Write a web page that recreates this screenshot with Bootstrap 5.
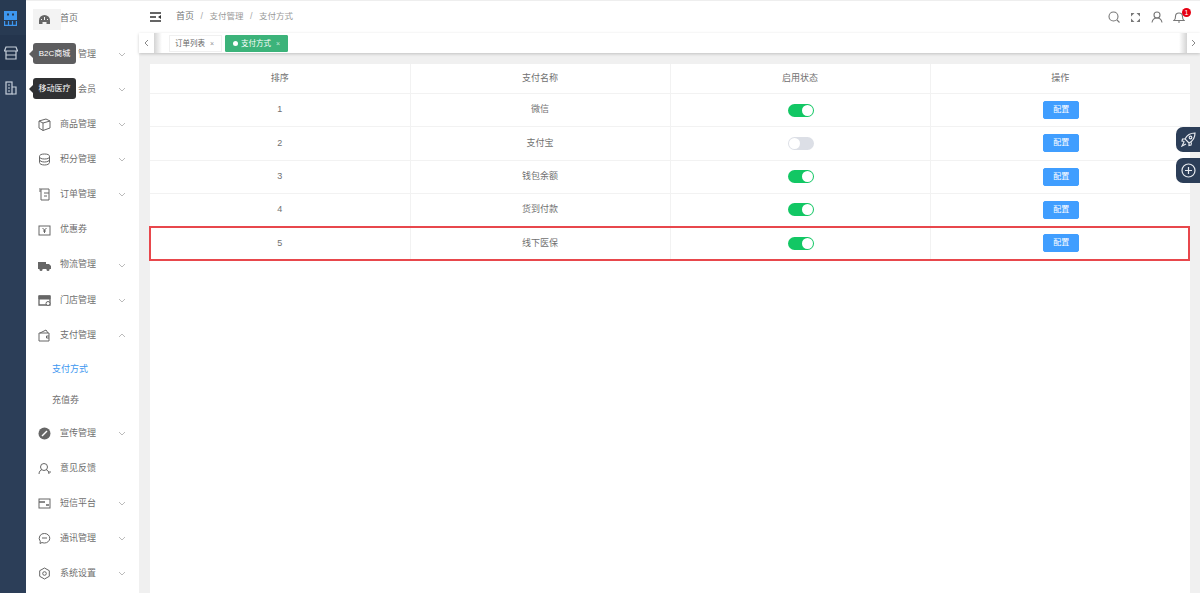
<!DOCTYPE html>
<html lang="zh"><head><meta charset="utf-8"><title>支付方式</title>
<link href="https://cdn.jsdelivr.net/npm/bootstrap@5.3.0/dist/css/bootstrap.min.css" rel="stylesheet">
<style>
html,body{height:593px;overflow:hidden}
body{font-family:"Liberation Sans","Noto Sans CJK SC",sans-serif;font-size:9px;color:#666;background:#f0f0f0}
svg{display:block;flex:none}
.shell{height:593px}
.rail{width:26px;background:#2c3e58;flex:none;position:relative}
.rail-item{height:35px;display:flex;align-items:center;justify-content:center;color:#c6cfda;padding-right:5px}
.rail-item.act{color:#3d97f0;background:#283a52}
.rail-item.mid{background:#24354d}
.tip{position:absolute;left:33px;height:21px;background:#303133;color:#fff;border-radius:3px;font-size:8px;line-height:21px;width:43px;text-align:center;white-space:nowrap}
.tip::before{content:"";position:absolute;left:-4px;top:7px;border:4px solid transparent;border-left:0;border-right-color:#303133}
.tip.t1{top:43px;background:#5d5d5f}.tip.t1::before{border-right-color:#5d5d5f}
.tip.t2{top:78px}
.side{width:113px;background:#fff;flex:none;padding-top:1.6px;box-shadow:inset 0 1px 0 #eee}
.mi{height:35.15px;display:flex;align-items:center;padding-left:12px;color:#6f6f6f;position:relative}
.mi .ic{width:13px;height:13px;margin-right:9px;color:#666;position:relative}
.mi .ch{margin-left:auto;margin-right:13px;color:#bbb}
.mi.home::before{content:"";position:absolute;left:7px;top:7px;width:28px;height:21px;background:#f3f3f3}
.hid{margin-left:18px}
.gap-ic{width:13px;margin-right:9px}
.sub{height:31.4px;display:flex;align-items:center;padding:2px 0 0 26px;color:#6f6f6f}
.sub.on{color:#3d97f0}
.main{min-width:0;flex:1 1 0}
.topbar{height:33px;background:#fff;padding:0 15px 0 11px;border-top:1px solid #eee}
.crumb{margin-left:15px;color:#777}
.crumb i{font-style:normal;margin:0 6.500px;color:#aaa}
.crumb .pale{color:#999;font-size:8.500px}
.tools{gap:10px}
.tabs{height:20px;background:#fff;box-shadow:0 1px 3px rgba(0,0,0,.2);position:relative}
.tab-arrow{width:15px;display:flex;align-items:center;justify-content:center;color:#888;height:20px;flex:none}
.tab-arrow.rt{width:13px}
.tab-fade{width:8px;height:20px;background:linear-gradient(90deg,#d4d4d4,#fff);margin-right:7px;flex:none}
.tab-fade.r{background:linear-gradient(90deg,#fff,#d4d4d4);margin:0 0 0 auto}
.tabi{height:17px;line-height:15px;font-size:7.500px;padding:0 7px 0 5px;margin:1px 3px 0 0;background:#fff;color:#666;border:1px solid #f0f0f0;white-space:nowrap}
.tabi.on{background:#3cb37a;color:#fff;border-color:#3cb37a;border-radius:1px;padding:0 7px}
.dot{display:inline-block;width:5px;height:5px;border-radius:50%;background:#fff;margin-right:3px;vertical-align:0}
.x{margin-left:5px;font-size:7px;opacity:.7}
.content{padding:11px 10px 0 11px;height:540px;position:relative}
.panel{height:100%;background:#fff}
.pay{table-layout:fixed;background:#fff;margin:0;font-size:9px;color:#707070;--bs-table-color:#707070;--bs-table-bg:#fff}
.pay th,.pay td{text-align:center;vertical-align:middle;padding:0;border-color:#f2f2f2;font-weight:400;border-width:0 1px 1px 0}
.pay th:last-child,.pay td:last-child{border-right:0}
.pay thead tr{height:29.5px}
.pay tbody tr{height:33.3px}
.hlbox{position:absolute;left:10px;top:173px;width:1041px;height:35px;border:2px solid #e8474c;pointer-events:none}
.sw{display:inline-block;width:26px;height:13px;border-radius:7px;background:#12c764;position:relative;vertical-align:middle;margin-left:2px}
.sw::after{content:"";position:absolute;right:1px;top:1px;width:11px;height:11px;border-radius:50%;background:#fff}
.sw.off{background:#dcdfe6}.sw.off::after{right:auto;left:1px}
.cfg{--bs-btn-bg:#409eff;--bs-btn-border-color:#409eff;--bs-btn-color:#fff;--bs-btn-hover-bg:#409eff;--bs-btn-hover-color:#fff;--bs-btn-padding-x:0;--bs-btn-padding-y:0;--bs-btn-font-size:8px;--bs-btn-border-radius:2px;width:36px;height:18px;line-height:16px;display:inline-block;vertical-align:middle;margin-left:2px}
.float{position:absolute;right:0;width:24px;height:25px;background:#2c3e58;border-radius:7px 0 0 7px;color:#e6e9ee;display:flex;align-items:center;justify-content:center}
.float.f1{top:127px}.float.f2{top:158px}
.bell{position:relative}
.badge-dot{position:absolute;left:9px;top:-3px;width:9px;height:9px;border-radius:50%;background:#e60012;color:#fff;font-size:7px;line-height:9px;text-align:center}
</style></head><body>
<div class="d-flex shell position-relative">
 <div class="rail">
  <div class="rail-item act"><svg width="13" height="16" viewBox="0 0 13 16" fill="currentColor"><path d="M0 1h13v9H0zM3 3.500v2h2v-2zM8 3.500v2h2v-2z" fill-rule="evenodd"/><path d="M.6 11v4.400h11.800V11M4.500 11v4M8.500 11v4" fill="none" stroke="currentColor" stroke-width="1.200"/></svg></div>
  <div class="rail-item mid"><svg width="14" height="14" viewBox="0 0 14 14" fill="none" stroke="currentColor" stroke-width="1.200"><path d="M2 1h10l1.500 4h-13z"/><path d="M2 5v8h10V5M2 9h10"/></svg></div>
  <div class="rail-item"><svg width="12" height="14" viewBox="0 0 12 14" fill="none" stroke="currentColor" stroke-width="1.200"><rect x="1" y="1" width="6" height="12"/><path d="M7 6h4v7H7M3 4h2M3 7h2M3 10h2"/></svg></div>
 </div>
 <div class="tip t1">B2C商城</div>
 <div class="tip t2">移动医疗</div>
 <nav class="side">
  <div class="mi home"><svg class="ic" viewBox="0 0 13 13" fill="currentColor"><path d="M6.500 2A5.500 5.500 0 0 0 1 7.500V11h3.500V9h4v2H12V7.500A5.500 5.500 0 0 0 6.500 2zM6 4h1v3H6zM3 6h1v1H3zM9 6h1v1H9z" fill-rule="evenodd"/></svg>首页</div>
  <div class="mi"><span class="gap-ic"></span><span class="hid">管理</span><svg class="ch" width="8" height="5" viewBox="0 0 8 5" fill="none" stroke="currentColor"><path d="M1 1l3 3 3-3"/></svg></div>
  <div class="mi"><span class="gap-ic"></span><span class="hid">会员</span><svg class="ch" width="8" height="5" viewBox="0 0 8 5" fill="none" stroke="currentColor"><path d="M1 1l3 3 3-3"/></svg></div>
  <div class="mi"><svg class="ic" viewBox="0 0 13 13" fill="none" stroke="currentColor"><path d="M1 3l7-2 4 2v7l-7 2.500L1 10zM1 3l4 2v7.500M5 5l7-2"/></svg>商品管理<svg class="ch" width="8" height="5" viewBox="0 0 8 5" fill="none" stroke="currentColor"><path d="M1 1l3 3 3-3"/></svg></div>
  <div class="mi"><svg class="ic" viewBox="0 0 13 13" fill="none" stroke="currentColor"><ellipse cx="6.500" cy="3.500" rx="5" ry="2.500"/><path d="M1.500 3.500v6c0 1.400 2.200 2.500 5 2.500s5-1.100 5-2.500v-6M1.500 6.500c0 1.400 2.200 2.500 5 2.500s5-1.100 5-2.500"/></svg>积分管理<svg class="ch" width="8" height="5" viewBox="0 0 8 5" fill="none" stroke="currentColor"><path d="M1 1l3 3 3-3"/></svg></div>
  <div class="mi"><svg class="ic" viewBox="0 0 13 13" fill="none" stroke="currentColor"><path d="M1 1h10v2M3 1v11h2M3 3H1M6 5h5M6 8h3M11 3v9H5"/></svg>订单管理<svg class="ch" width="8" height="5" viewBox="0 0 8 5" fill="none" stroke="currentColor"><path d="M1 1l3 3 3-3"/></svg></div>
  <div class="mi"><svg class="ic" viewBox="0 0 13 13" fill="none" stroke="currentColor"><rect x="1" y="2" width="11" height="9"/><path d="M4.500 4l2 2 2-2M6.500 6v3M5 7h3" /></svg>优惠券</div>
  <div class="mi"><svg class="ic" viewBox="0 0 13 13" fill="currentColor"><rect x="0" y="3" width="8" height="7"/><path d="M8 5h3l2 2v3H8z"/><circle cx="3" cy="10.500" r="1.500"/><circle cx="10" cy="10.500" r="1.500"/></svg>物流管理<svg class="ch" width="8" height="5" viewBox="0 0 8 5" fill="none" stroke="currentColor"><path d="M1 1l3 3 3-3"/></svg></div>
  <div class="mi"><svg class="ic" viewBox="0 0 13 13" fill="none" stroke="currentColor"><path d="M1 2h11v9H1z" stroke-width="1.300"/><path d="M1 2h11v3H1z" fill="currentColor"/><circle cx="10" cy="9.500" r="2" fill="#fff"/></svg>门店管理<svg class="ch" width="8" height="5" viewBox="0 0 8 5" fill="none" stroke="currentColor"><path d="M1 1l3 3 3-3"/></svg></div>
  <div class="mi"><svg class="ic" viewBox="0 0 13 13" fill="none" stroke="currentColor"><path d="M2 4l6-3 2 3M1 4h10v8H1zM11 7H8.500v2H11"/></svg>支付管理<svg class="ch" width="8" height="5" viewBox="0 0 8 5" fill="none" stroke="currentColor"><path d="M1 4l3-3 3 3"/></svg></div>
  <div class="sub on">支付方式</div>
  <div class="sub">充值券</div>
  <div class="mi"><svg class="ic" viewBox="0 0 13 13"><circle cx="6.500" cy="6.500" r="6" fill="currentColor"/><path d="M4 9l5-5" stroke="#fff" stroke-width="1.500"/></svg>宣传管理<svg class="ch" width="8" height="5" viewBox="0 0 8 5" fill="none" stroke="currentColor"><path d="M1 1l3 3 3-3"/></svg></div>
  <div class="mi"><svg class="ic" viewBox="0 0 13 13" fill="none" stroke="currentColor"><circle cx="6" cy="5" r="3.500"/><path d="M1 12c0-3 2-4 3-4.500M11 12c0-3-2-4-3-4.500M10 10h3"/></svg>意见反馈</div>
  <div class="mi"><svg class="ic" viewBox="0 0 13 13" fill="none" stroke="currentColor"><rect x="1" y="2" width="11" height="9"/><path d="M1 5h6M8 8h3" stroke-width="1.500"/></svg>短信平台<svg class="ch" width="8" height="5" viewBox="0 0 8 5" fill="none" stroke="currentColor"><path d="M1 1l3 3 3-3"/></svg></div>
  <div class="mi"><svg class="ic" viewBox="0 0 13 13" fill="none" stroke="currentColor"><path d="M6.500 1.500a5 4.500 0 0 1 0 9.500c-1 0-2-.2-2.500-.5L2 11.500l.3-2.200A4.800 4.800 0 0 1 6.500 1.500zM4 6h5"/></svg>通讯管理<svg class="ch" width="8" height="5" viewBox="0 0 8 5" fill="none" stroke="currentColor"><path d="M1 1l3 3 3-3"/></svg></div>
  <div class="mi"><svg class="ic" viewBox="0 0 13 13" fill="none" stroke="currentColor"><path d="M6.500 1l4.800 2.700v5.600L6.500 12 1.700 9.300V3.700z"/><circle cx="6.500" cy="6.500" r="1.800"/></svg>系统设置<svg class="ch" width="8" height="5" viewBox="0 0 8 5" fill="none" stroke="currentColor"><path d="M1 1l3 3 3-3"/></svg></div>
 </nav>
 <div class="main">
  <header class="topbar d-flex align-items-center">
   <svg width="11" height="10" viewBox="0 0 11 10" fill="none" stroke="#333" stroke-width="1.300"><path d="M0 1h11M0 5h6M0 9h11"/><path d="M11 3v4L8 5z" fill="#333" stroke="none"/></svg>
   <div class="crumb">首页<i>/</i><span class="pale">支付管理</span><i>/</i><span class="pale">支付方式</span></div>
   <div class="ms-auto d-flex align-items-center tools">
    <svg width="12" height="12" viewBox="0 0 12 12" fill="none" stroke="#777" stroke-width="1.100"><circle cx="5.500" cy="5.500" r="4.500"/><path d="M9 9l2.500 2.500"/></svg>
    <svg width="11" height="11" viewBox="0 0 11 11" fill="#777"><path d="M1 1h3.500L1 4.500zM10 1v3.500L6.500 1zM1 10V6.500L4.500 10zM10 10H6.500L10 6.500z"/></svg>
    <svg width="12" height="12" viewBox="0 0 12 12" fill="none" stroke="#777" stroke-width="1.100"><circle cx="6" cy="4" r="3"/><path d="M1 11.500c.5-3 2.500-4.500 5-4.500s4.500 1.500 5 4.500"/></svg>
    <div class="bell"><svg width="12" height="12" viewBox="0 0 12 12" fill="none" stroke="#777" stroke-width="1.100"><path d="M1 9.500c1.500-1 1.500-2.500 1.500-4a3.500 3.500 0 0 1 7 0c0 1.500 0 3 1.500 4zM5 11h2"/></svg><span class="badge-dot">1</span></div>
   </div>
  </header>
  <div class="tabs d-flex align-items-center">
   <div class="tab-arrow"><svg width="5" height="8" viewBox="0 0 5 8" fill="none" stroke="currentColor"><path d="M4 1L1 4l3 3"/></svg></div>
   <div class="tab-fade"></div>
   <div class="tabi">订单列表<span class="x">×</span></div>
   <div class="tabi on"><span class="dot"></span>支付方式<span class="x">×</span></div>
   <div class="tab-fade r"></div>
   <div class="tab-arrow rt"><svg width="5" height="8" viewBox="0 0 5 8" fill="none" stroke="currentColor"><path d="M1 1l3 3-3 3"/></svg></div>
  </div>
  <div class="content">
   <div class="panel">
   <table class="table pay">
    <thead><tr><th>排序</th><th>支付名称</th><th>启用状态</th><th>操作</th></tr></thead>
    <tbody>
     <tr><td>1</td><td>微信</td><td><span class="sw"></span></td><td><a class="btn cfg">配置</a></td></tr>
     <tr><td>2</td><td>支付宝</td><td><span class="sw off"></span></td><td><a class="btn cfg">配置</a></td></tr>
     <tr><td>3</td><td>钱包余额</td><td><span class="sw"></span></td><td><a class="btn cfg">配置</a></td></tr>
     <tr><td>4</td><td>货到付款</td><td><span class="sw"></span></td><td><a class="btn cfg">配置</a></td></tr>
     <tr><td>5</td><td>线下医保</td><td><span class="sw"></span></td><td><a class="btn cfg">配置</a></td></tr>
    </tbody>
   </table>
   </div>
   <div class="hlbox"></div>
  </div>
 </div>
 <div class="float f1"><svg width="15" height="15" viewBox="0 0 15 15" fill="none" stroke="currentColor" stroke-width="1.200"><path d="M14 1c-5 0-8 2-10 6l4 4c4-2 6-5 6-10zM4 7H1.500L1 9l2.500.5M8 11v2.500l2-.5.5-2.500M3 10l-2 4 4-2"/><circle cx="9.500" cy="5.500" r="1.300"/></svg></div>
 <div class="float f2"><svg width="15" height="15" viewBox="0 0 15 15" fill="none" stroke="currentColor" stroke-width="1.200"><circle cx="7.500" cy="7.500" r="6.500"/><path d="M4 7.500h7M7.500 4v7"/></svg></div>
</div>
</body></html>
